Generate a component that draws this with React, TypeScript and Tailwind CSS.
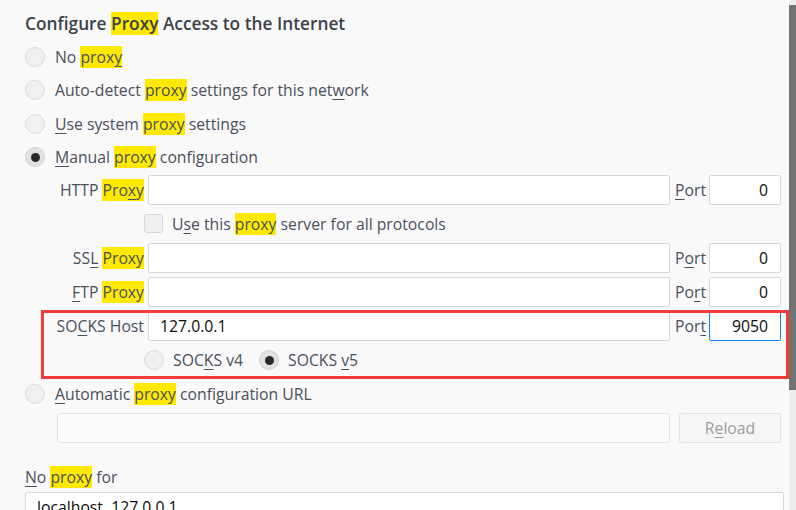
const hl = 'bg-[#ffe900]';

function K({ c }: { c: string }) {
  return <span className="underline decoration-1 underline-offset-[3px]">{c}</span>;
}

function Radio({ checked = false }: { checked?: boolean }) {
  return (
    <span
      className={
        'flex h-[20px] w-[20px] shrink-0 items-center justify-center rounded-full border ' +
        (checked ? 'border-[#d2d2d4] bg-[#e2e2e4]' : 'border-[#dadadc] bg-[#f0f0f2]')
      }
    >
      {checked && <span className="h-[9px] w-[9px] rounded-full bg-[#2a2a2e]" />}
    </span>
  );
}

function RadioRow({ checked, children }: { checked?: boolean; children: React.ReactNode }) {
  return (
    <div className="flex h-[33.5px] items-center gap-[10px]">
      <Radio checked={checked} />
      <span className="pt-[2px]">{children}</span>
    </div>
  );
}

function ProxyRow({
  label,
  port,
  portLabel,
  value,
  focused,
}: {
  label: React.ReactNode;
  port: string;
  portLabel: React.ReactNode;
  value?: string;
  focused?: boolean;
}) {
  return (
    <div className="flex h-[30px] items-center">
      <div className="w-[119px] shrink-0 pt-[2px] text-right whitespace-nowrap">{label}</div>
      <div className="ml-[4px] flex h-[30px] w-[522px] shrink-0 items-center rounded-[2px] border border-[#d7d7db] bg-white px-[11px] pt-[2px] text-[#0c0c0d]">
        {value}
      </div>
      <div className="ml-[5px] w-[34px] shrink-0 pt-[2px]">{portLabel}</div>
      <div
        className={
          'flex h-[30px] w-[72px] shrink-0 items-center justify-end rounded-[2px] border bg-white pt-[2px] pr-[12px] text-[#0c0c0d] ' +
          (focused ? 'border-[#0a84ff]' : 'border-[#d7d7db]')
        }
      >
        {port}
      </div>
    </div>
  );
}

export default function App() {
  return (
    <div className="flex h-[510px] w-[796px] overflow-hidden bg-[#f9f9fa] font-['Open_Sans',sans-serif] text-[15.75px] text-[#4a505b]">
      <div className="relative w-[789px] shrink-0 pl-[25px]">
        <h1 className="mt-[12px] pt-[1px] text-[17.3px] leading-[22px] font-semibold text-[#3c424c]">
          Configure <span className={hl}>Proxy</span> Access to the Internet
        </h1>

        <div className="mt-[5px]">
          <RadioRow>
            No <span className={hl}>prox<K c="y" /></span>
          </RadioRow>
          <RadioRow>
            Auto-detect <span className={hl}>proxy</span> settings for this net<K c="w" />ork
          </RadioRow>
          <RadioRow>
            <K c="U" />se system <span className={hl}>proxy</span> settings
          </RadioRow>
          <RadioRow checked>
            <K c="M" />anual <span className={hl}>proxy</span> configuration
          </RadioRow>
        </div>

        <div className="mt-[1px]">
          <ProxyRow
            label={
              <>
                HTTP <span className={hl}>Pro<K c="x" />y</span>
              </>
            }
            portLabel={<><K c="P" />ort</>}
            port="0"
          />

          <div className="mt-[9px] flex h-[19px] items-center pl-[119px]">
            <span className="h-[19px] w-[19px] rounded-[3px] border border-[#d7d7db] bg-[#efeff1]" />
            <span className="ml-[9px] pt-[2px]">
              U<K c="s" />e this <span className={hl}>proxy</span> server for all protocols
            </span>
          </div>

          <div className="mt-[10px]">
            <ProxyRow
              label={
                <>
                  SS<K c="L" /> <span className={hl}>Proxy</span>
                </>
              }
              portLabel={<>P<K c="o" />rt</>}
              port="0"
            />
          </div>
          <div className="mt-[4px]">
            <ProxyRow
              label={
                <>
                  <K c="F" />TP <span className={hl}>Proxy</span>
                </>
              }
              portLabel={<>Po<K c="r" />t</>}
              port="0"
            />
          </div>
          <div className="mt-[4px]">
            <ProxyRow
              label={<>SO<K c="C" />KS Host</>}
              portLabel={<>Por<K c="t" /></>}
              value="127.0.0.1"
              port="9050"
              focused
            />
          </div>

          <div className="mt-[9px] flex h-[20px] items-center pl-[119px]">
            <Radio />
            <span className="ml-[9px] w-[76px] pt-[2px] whitespace-nowrap">
              SOC<K c="K" />S v4
            </span>
            <span className="ml-[10px]">
              <Radio checked />
            </span>
            <span className="ml-[9px] pt-[2px]">
              SOCKS <K c="v" />5
            </span>
          </div>
        </div>

        <div className="mt-[7px] flex h-[33px] items-center gap-[10px]">
          <Radio />
          <span className="pt-[2px]">
            <K c="A" />utomatic <span className={hl}>proxy</span> configuration URL
          </span>
        </div>

        <div className="mt-[3px] flex h-[30px] items-center pl-[32px]">
          <div className="h-[30px] w-[613px] rounded-[2px] border border-[#e3e3e6] bg-[#fbfbfb]" />
          <div className="ml-[9px] flex h-[30px] w-[102px] items-center justify-center rounded-[2px] border border-[#e3e3e6] bg-[#f6f6f7] pt-[2px] text-[#9c9ca0]">
            R<K c="e" />load
          </div>
        </div>

        <div className="mt-[23px] h-[20px] pt-[1px] leading-[20px]">
          <K c="N" />o <span className={hl}>proxy</span> for
        </div>

        <div className="mt-[6px] flex h-[30px] w-[759px] items-center rounded-[2px] border border-[#d7d7db] bg-white px-[11px] pt-[2px] text-[#0c0c0d]">
          localhost, 127.0.0.1
        </div>

        <div className="pointer-events-none absolute top-[310px] left-[41px] h-[69px] w-[748px] border-[3px] border-[#f43b3b]" />
      </div>

      <div className="flex w-[7px] flex-col bg-[#ededed]">
        <div className="h-[5px]" />
        <div className="h-[385px] bg-[#737373]" />
      </div>
    </div>
  );
}
